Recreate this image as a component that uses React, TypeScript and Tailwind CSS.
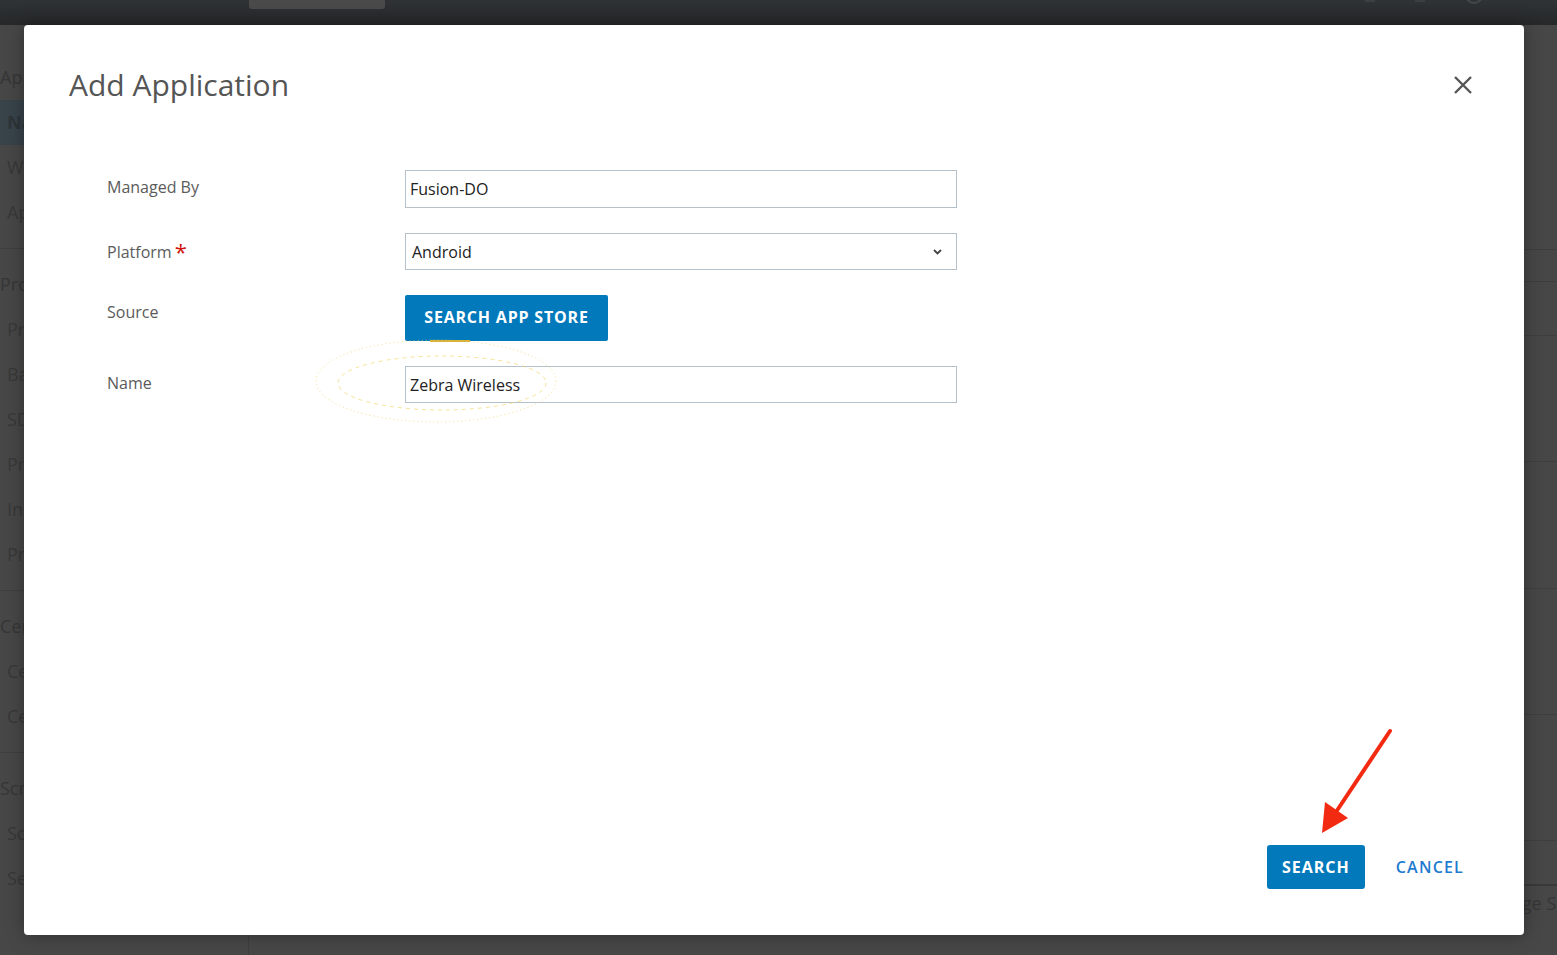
import { ReactNode } from "react";

const font = { fontFamily: '"Open Sans", "Liberation Sans", sans-serif' };

// dimmed app behind the dialog
const sideItems: { label: string; kind: "head" | "item" | "active" | "rule" }[] = [
  { label: "Apps", kind: "head" },
  { label: "Native", kind: "active" },
  { label: "Web", kind: "item" },
  { label: "App Catalog", kind: "item" },
  { label: "", kind: "rule" },
  { label: "Profiles", kind: "head" },
  { label: "Profiles", kind: "item" },
  { label: "Baselines", kind: "item" },
  { label: "SDK", kind: "item" },
  { label: "Product", kind: "item" },
  { label: "Install", kind: "item" },
  { label: "Provisioning", kind: "item" },
  { label: "", kind: "rule" },
  { label: "Certificates", kind: "head" },
  { label: "Certificates", kind: "item" },
  { label: "Certificate Authorities", kind: "item" },
  { label: "", kind: "rule" },
  { label: "Scripts", kind: "head" },
  { label: "Scripts", kind: "item" },
  { label: "Sensors", kind: "item" },
];

function Sidebar() {
  return (
    <aside className="w-[249px] shrink-0 border-r border-[#3e3e3e] pt-[30px]">
      {sideItems.map((it, i) => {
        if (it.kind === "rule") return <div key={i} className="my-[13px] border-t border-[#3f3f3f]" />;
        if (it.kind === "active")
          return (
            <div key={i} className="flex h-[45px] items-center bg-[#38434a] pl-[7px] text-[18px] font-bold text-[#2e3539]">
              {it.label}
            </div>
          );
        return (
          <div
            key={i}
            className={
              it.kind === "head"
                ? "flex h-[45px] items-center pl-0 text-[18px] text-[#363636]"
                : "flex h-[45px] items-center pl-[7px] text-[18px] text-[#383838]"
            }
          >
            {it.label}
          </div>
        );
      })}
    </aside>
  );
}

function Field({ label, required, children }: { label: string; required?: boolean; children: ReactNode }) {
  return (
    <div className="flex items-start">
      <div
        className={
          required
            ? "w-[298px] shrink-0 pt-[7px] text-[16px] leading-[24px] text-[#5b5b5b]"
            : "w-[298px] shrink-0 pt-[5px] text-[16px] leading-[24px] text-[#5b5b5b]"
        }
      >
        {label}
        {required && <span className="ml-[3px] align-top text-[22px] leading-[22px] text-[#d0140c]">*</span>}
      </div>
      {children}
    </div>
  );
}

function TextBox({ value, h = "h-[37px]" }: { value: string; h?: string }) {
  return (
    <div className={`flex w-[552px] items-center border border-[#b4c0ca] pl-[4px] text-[16px] text-[#222] ${h}`}>
      {value}
    </div>
  );
}

export default function App() {
  return (
    <div className="relative h-[955px] w-[1557px] overflow-hidden bg-[#474747]" style={font}>
      {/* top bar */}
      <header className="relative flex h-[25px] bg-gradient-to-b from-[#2f3336] to-[#262829]">
        <div className="ml-[249px] h-[9px] w-[136px] rounded-b-[3px] bg-[#4a4a4a]" />
        <div className="ml-auto mr-[74px] flex items-start gap-[40px] pt-0">
          <div className="h-[2px] w-[10px] bg-[#3c3f42]" />
          <div className="h-[2px] w-[10px] bg-[#3c3f42]" />
          <div className="-mt-[14px] h-[18px] w-[18px] rounded-full border-2 border-[#45484a]" />
        </div>
      </header>

      <div className="flex h-[930px]">
        <Sidebar />
        <main className="flex-1">
          <div className="ml-auto mt-[224px] flex h-[33px] w-[330px] items-center border border-[#3d3d3d] pl-[10px] text-[16px] text-[#363636]">
            Search
          </div>
          <div className="mt-[53px] border-t border-[#3e3e3e]" />
          <div className="mt-[125px] border-t border-[#3e3e3e]" />
          <div className="mt-[126px] border-t border-[#3e3e3e]" />
          <div className="mt-[125px] border-t border-[#3e3e3e]" />
          <div className="mt-[125px] border-t border-[#3e3e3e]" />
          <div className="mt-[43px] border-t-2 border-[#393939]" />
          <div className="ml-[1252px] whitespace-nowrap pt-[4px] text-[18px] text-[#363636]">Page Size</div>
        </main>
      </div>

      {/* dialog */}
      <div className="absolute left-[24px] top-[25px] flex h-[910px] w-[1500px] flex-col rounded-[4px] bg-white shadow-[0_0_18px_rgba(0,0,0,0.35)]">
        <div className="flex items-center justify-between pl-[45px] pr-[52px] pt-[39px]">
          <h1 className="text-[30px] font-normal leading-[42px] text-[#555]">Add Application</h1>
          <button className="flex h-[18px] w-[18px] items-center justify-center">
            <svg width="18" height="18" viewBox="0 0 18 18">
              <path d="M1 1 L17 17 M17 1 L1 17" stroke="#555" strokeWidth="2.4" />
            </svg>
          </button>
        </div>

        <div className="mt-[64px] flex flex-col gap-[25px] pl-[83px]">
          <Field label="Managed By">
            <TextBox value="Fusion-DO" h="h-[38px]" />
          </Field>
          <Field label="Platform" required>
            <div className="flex h-[37px] w-[552px] items-center justify-between border border-[#b4c0ca] pl-[6px] pr-[14px] text-[16px] text-[#222]">
              Android
              <svg width="9" height="6" viewBox="0 0 9 6">
                <path d="M1 1 L4.5 4.5 L8 1" fill="none" stroke="#444" strokeWidth="1.8" />
              </svg>
            </div>
          </Field>
          <Field label="Source">
            <button className="h-[46px] w-[203px] rounded-[2px] bg-[#0279bb] pb-[3px] text-[16px] font-bold tracking-[0.8px] text-white">
              SEARCH APP STORE
            </button>
          </Field>
          <Field label="Name">
            <TextBox value="Zebra Wireless" />
          </Field>
        </div>

        <div className="mt-auto flex items-center justify-end gap-[15px] pb-[46px] pr-[44px]">
          <button className="h-[44px] w-[98px] rounded-[3px] bg-[#0279bb] text-[16px] font-bold tracking-[1px] text-white">
            SEARCH
          </button>
          <button className="h-[44px] px-[16px] text-[16px] font-semibold tracking-[1.2px] text-[#1f7bd0]">CANCEL</button>
        </div>
      </div>

      {/* markup drawn over the dialog */}
      <svg className="pointer-events-none absolute left-0 top-0" width="1557" height="955">
        <ellipse cx="436" cy="381" rx="120" ry="41" fill="none" stroke="#f2d66a" strokeWidth="1" strokeDasharray="1 3" opacity="0.8" />
        <ellipse cx="442" cy="383" rx="104" ry="27" fill="none" stroke="#f2d66a" strokeWidth="1" strokeDasharray="4 4" opacity="0.7" />
        <path d="M430 341 L470 341" stroke="#d9b23a" strokeWidth="2" />
        <path d="M1390 731 L1336 812" stroke="#f22a12" strokeWidth="4" strokeLinecap="round" />
        <path d="M1322 833 L1325 802 L1348 818 Z" fill="#f22a12" />
      </svg>
    </div>
  );
}
